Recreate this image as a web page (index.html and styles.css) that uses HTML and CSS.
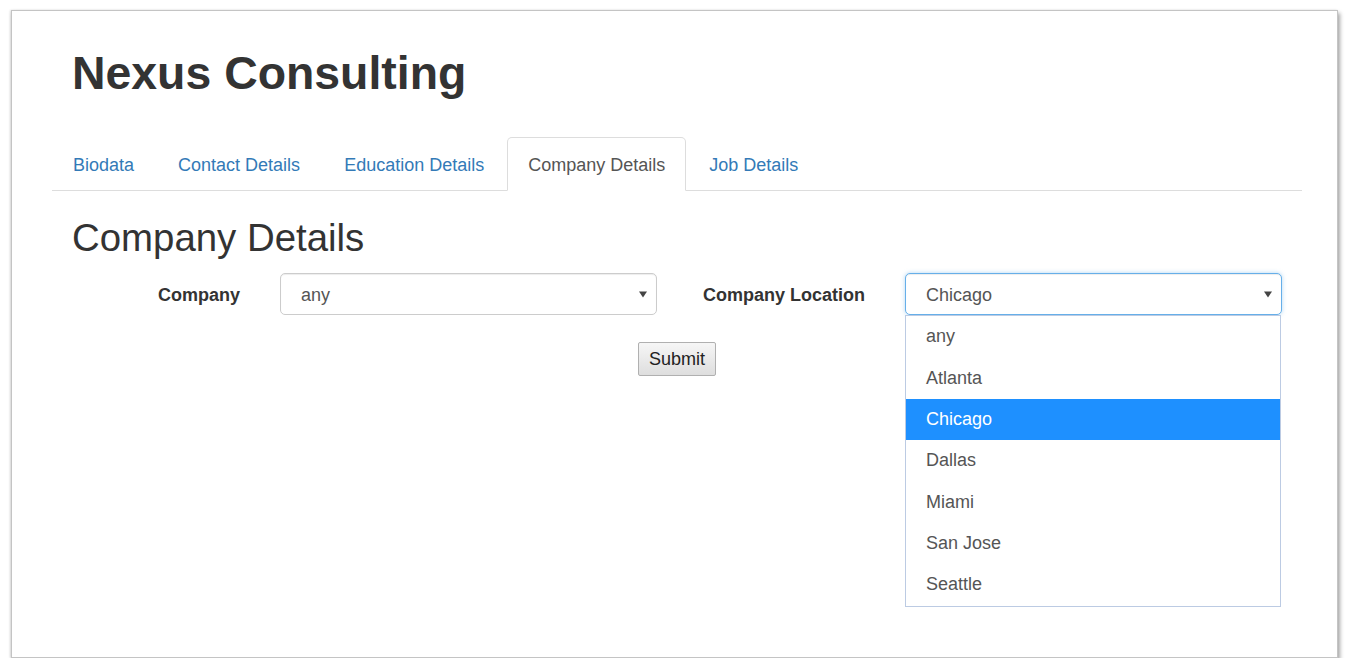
FILE: index.html
```html
<!DOCTYPE html>
<html lang="en">
<head>
<meta charset="utf-8">
<title>Nexus Consulting</title>
<link rel="stylesheet" href="styles.css">
</head>
<body>
<div class="window">
  <div class="container">
    <h1 class="brand">Nexus Consulting</h1>
    <ul class="tabs">
      <li class="tab"><a class="tab-link">Biodata</a></li>
      <li class="tab"><a class="tab-link">Contact Details</a></li>
      <li class="tab"><a class="tab-link">Education Details</a></li>
      <li class="tab"><a class="tab-link active">Company Details</a></li>
      <li class="tab"><a class="tab-link">Job Details</a></li>
    </ul>
    <div class="pane">
      <h2 class="pane-title">Company Details</h2>
      <div class="form-row">
        <label class="lbl lbl-company">Company</label>
        <div class="select">
          <span class="select-value">any</span>
          <svg class="caret" width="8" height="7" viewBox="0 0 8 7"><path d="M0 0.5H8L4 6.5Z" fill="#444"/></svg>
        </div>
        <label class="lbl lbl-location">Company Location</label>
        <div class="select-wrap">
          <div class="select select-focus">
            <span class="select-value">Chicago</span>
            <svg class="caret" width="8" height="7" viewBox="0 0 8 7"><path d="M0 0.5H8L4 6.5Z" fill="#444"/></svg>
          </div>
          <ul class="dropdown">
            <li class="option">any</li>
            <li class="option">Atlanta</li>
            <li class="option selected">Chicago</li>
            <li class="option">Dallas</li>
            <li class="option">Miami</li>
            <li class="option">San Jose</li>
            <li class="option">Seattle</li>
          </ul>
        </div>
      </div>
      <div class="actions">
        <button class="btn" type="button">Submit</button>
      </div>
    </div>
  </div>
</div>
</body>
</html>
```

FILE: styles.css
```css
html, body {
  margin: 0;
  padding: 0;
  background: #ffffff;
}

body {
  font-family: "Liberation Sans", Arial, Helvetica, sans-serif;
  color: #333;
}

.window {
  margin: 10px 0 0 11px;
  width: 1327px;
  height: 648px;
  box-sizing: border-box;
  border: 1px solid #c4c4c4;
  box-shadow: 2px 3px 4px rgba(0, 0, 0, 0.35), -1px 0 2px rgba(0, 0, 0, 0.12);
  background: #fff;
}

.container {
  width: 1250px;
  margin-left: 40px;
  padding-top: 37px;
}

.brand {
  margin: 0 0 0 20px;
  font-size: 46.4px;
  line-height: 1.1;
  font-weight: bold;
  color: #333;
}

.tabs {
  list-style: none;
  margin: 38px 0 0;
  padding: 0;
  display: flex;
  border-bottom: 1px solid #ddd;
}

.tab {
  margin-right: 2px;
  margin-bottom: -1px;
}

.tab-link {
  display: block;
  padding: 14px 20px 12px;
  line-height: 26px;
  font-size: 18px;
  color: #337ab7;
  border: 1px solid transparent;
  border-radius: 5px 5px 0 0;
}

.tab-link.active {
  color: #555;
  background: #fff;
  border-color: #ddd;
  border-bottom-color: transparent;
}

.pane-title {
  margin: 26px 0 0 20px;
  font-size: 38.4px;
  line-height: 1.1;
  font-weight: normal;
  color: #333;
}

.form-row {
  display: flex;
  align-items: center;
  margin-top: 14px;
  height: 42px;
}

.lbl {
  font-size: 18px;
  font-weight: bold;
  color: #333;
  text-align: right;
  margin-right: 40px;
  padding-top: 2px;
}

.lbl-company {
  width: 188px;
}

.lbl-location {
  width: 208px;
}

.select-wrap {
  position: relative;
}

.select {
  width: 377px;
  height: 42px;
  box-sizing: border-box;
  border: 1px solid #ccc;
  border-radius: 5px;
  padding: 0 9px 0 20px;
  display: flex;
  align-items: center;
  justify-content: space-between;
  font-size: 18px;
  color: #555;
  background: #fff;
  box-shadow: inset 0 1px 1px rgba(0, 0, 0, 0.075);
}

.select-value {
  padding-top: 2px;
}

.select-focus {
  border-color: #66afe9;
  box-shadow: inset 0 1px 1px rgba(0, 0, 0, 0.075), 0 0 4px rgba(102, 175, 233, 0.5);
}

.caret {
  display: block;
  margin-top: 1px;
}

.dropdown {
  position: absolute;
  top: 42px;
  left: 0;
  width: 376px;
  box-sizing: border-box;
  margin: 0;
  padding: 0;
  list-style: none;
  border: 1px solid #bccbe3;
  background: #fff;
  z-index: 10;
}

.option {
  height: 41.33px;
  line-height: 41.33px;
  padding-left: 20px;
  font-size: 18px;
  color: #555;
}

.option.selected {
  background: #1e90ff;
  color: #fff;
}

.actions {
  display: flex;
  justify-content: center;
  margin-top: 27px;
}

.btn {
  height: 34px;
  padding: 0 10px;
  font-family: "Liberation Sans", Arial, sans-serif;
  font-size: 18px;
  color: #222;
  border: 1px solid #b0b0b0;
  border-radius: 2px;
  background: linear-gradient(#f6f6f6, #dedede);
}
```
